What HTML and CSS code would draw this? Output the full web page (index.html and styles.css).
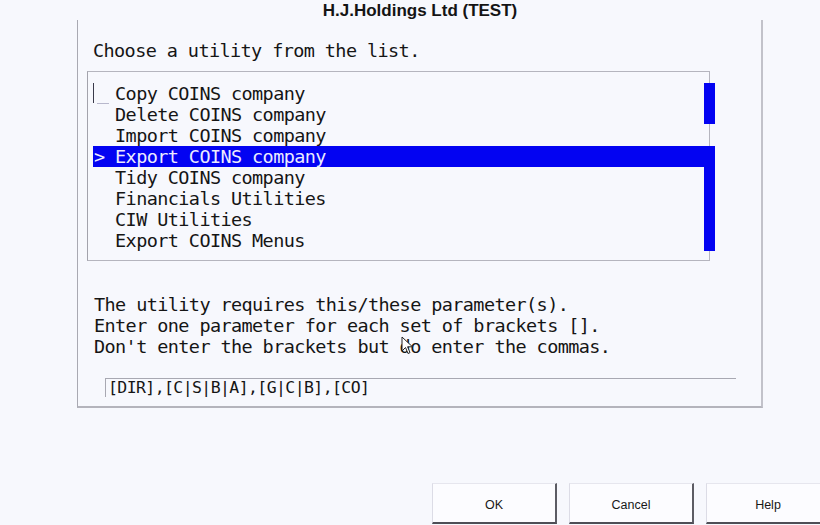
FILE: index.html
```html
<!DOCTYPE html>
<html>
<head>
<meta charset="utf-8">
<link rel="stylesheet" href="styles.css">
</head>
<body>
<div class="dialog">
  <div class="title">H.J.Holdings Ltd (TEST)</div>
  <div class="panel">
    <div class="prompt">Choose a utility from the list.</div>
    <div class="listbox">
      <div class="row"><span class="caret"></span><span class="caret-line"></span>  Copy COINS company</div>
      <div class="row">  Delete COINS company</div>
      <div class="row">  Import COINS company</div>
      <div class="row sel">&gt; Export COINS company</div>
      <div class="row">  Tidy COINS company</div>
      <div class="row">  Financials Utilities</div>
      <div class="row">  CIW Utilities</div>
      <div class="row">  Export COINS Menus</div>
      <div class="scroll thumb"></div>
      <div class="scroll bar"></div>
    </div>
    <div class="params">
      <div class="line">The utility requires this/these parameter(s).</div>
      <div class="line">Enter one parameter for each set of brackets [].</div>
      <div class="line">Don't enter the brackets but do enter the commas.</div>
      <svg class="pointer" width="14" height="20" viewBox="0 0 14 20"><path d="M1 1 L1 15 L4.5 11.5 L7 17.5 L9 16.6 L6.6 10.8 L11.5 10.8 Z" fill="#fff" stroke="#222" stroke-width="1"/></svg>
    </div>
    <div class="field">[DIR],[C|S|B|A],[G|C|B],[CO]</div>
  </div>
</div>
<div class="buttons">
  <div class="btn">OK</div>
  <div class="btn">Cancel</div>
  <div class="btn">Help</div>
</div>
</body>
</html>
```
FILE: styles.css
```css
html, body {
  margin: 0;
  padding: 0;
  background: #f7f8fd;
  width: 820px;
  height: 525px;
  overflow: hidden;
}

.dialog {
  margin-left: 77px;
  width: 686px;
}

.title {
  height: 20px;
  line-height: 21px;
  text-align: center;
  font-family: "Liberation Sans", Arial, sans-serif;
  font-weight: bold;
  font-size: 17px;
  color: #141414;
}

.panel {
  box-sizing: border-box;
  width: 686px;
  border-left: 1px solid #a9a9b2;
  border-right: 2px solid #c2c2ca;
  border-bottom: 2px solid #b4b4bc;
  padding: 20px 0 9px 9px;
  font-family: "DejaVu Sans Mono", monospace;
  font-size: 18.5px;
  letter-spacing: -0.6px;
  line-height: 21px;
  color: #151515;
}

.prompt {
  margin-left: 6px;
  height: 21px;
  white-space: pre;
}

.listbox {
  position: relative;
  box-sizing: border-box;
  margin-top: 10px;
  width: 623px;
  height: 190px;
  border: 1px solid #b5b5be;
  border-left-color: #a3a3ac;
  padding: 11px 0 9px 5px;
}

.row {
  position: relative;
  height: 21px;
  padding-left: 1px;
  white-space: pre;
}

.row.sel {
  background: #0303f2;
  color: #ecebff;
}

.caret {
  position: absolute;
  left: 0;
  top: 0;
  width: 1px;
  height: 20px;
  background: #3a3a4a;
}

.caret-line {
  position: absolute;
  left: 4px;
  top: 20px;
  width: 12px;
  height: 1px;
  background: #b8b8cc;
}

.scroll {
  position: absolute;
  left: 616px;
  width: 11px;
  background: #0303f2;
}

.thumb {
  top: 11px;
  height: 41px;
}

.bar {
  top: 74px;
  height: 105px;
}

.params {
  position: relative;
  margin-top: 33px;
  margin-left: 7px;
}

.line {
  height: 21px;
  white-space: pre;
}

.pointer {
  position: absolute;
  left: 307px;
  top: 42px;
}

.field {
  box-sizing: border-box;
  margin-top: 21px;
  margin-left: 18px;
  width: 631px;
  height: 19px;
  border-top: 1px solid #a8a8b2;
  border-left: 1px solid #a8a8b2;
  padding-left: 2px;
  font-size: 16.5px;
  letter-spacing: -0.6px;
  line-height: 18px;
  white-space: pre;
}

.buttons {
  display: flex;
  gap: 12px;
  margin-top: 75px;
  margin-left: 432px;
  width: 400px;
}

.btn {
  flex: none;
  box-sizing: border-box;
  width: 125px;
  height: 41px;
  padding-top: 3px;
  background: #fcfcff;
  border-top: 1px solid #e6e6ee;
  border-left: 1px solid #dcdce6;
  border-right: 2px solid #5c5c64;
  border-bottom: 2px solid #4e4e56;
  display: flex;
  align-items: center;
  justify-content: center;
  font-family: "Liberation Sans", Arial, sans-serif;
  font-size: 12.5px;
  color: #181818;
}
```
